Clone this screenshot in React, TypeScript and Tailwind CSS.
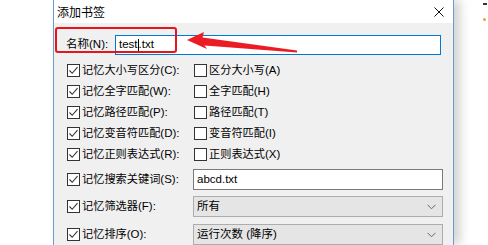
import React from "react";

type Row = { left: string; leftKey: string; right?: string; rightKey?: string };

const rows: Row[] = [
  { left: "记忆大小写区分", leftKey: "(C):", right: "区分大小写", rightKey: "(A)" },
  { left: "记忆全字匹配", leftKey: "(W):", right: "全字匹配", rightKey: "(H)" },
  { left: "记忆路径匹配", leftKey: "(P):", right: "路径匹配", rightKey: "(T)" },
  { left: "记忆变音符匹配", leftKey: "(D):", right: "变音符匹配", rightKey: "(I)" },
  { left: "记忆正则表达式", leftKey: "(R):", right: "正则表达式", rightKey: "(X)" },
];

const Check: React.FC<{ checked?: boolean }> = ({ checked }) => (
  <span className="w-[13px] h-[13px] border border-[#333] bg-white flex items-center justify-center shrink-0">
    {checked && (
      <svg width="11" height="11" viewBox="0 0 11 11">
        <path d="M1.5 5.5 L4.2 8.3 L9.5 2.2" stroke="#333" strokeWidth="1.1" fill="none" />
      </svg>
    )}
  </span>
);

const Label: React.FC<{ text: string; hotkey: string }> = ({ text, hotkey }) => (
  <span className="ml-[2px] whitespace-nowrap text-[11.2px]">
    {text}
    <span className="text-[11.5px]">{hotkey}</span>
  </span>
);

const Chevron = () => (
  <svg width="9" height="6" viewBox="0 0 9 6">
    <path d="M0.5 0.8 L4.5 4.8 L8.5 0.8" stroke="#666" strokeWidth="1" fill="none" />
  </svg>
);

const App: React.FC = () => {
  return (
    <div className="relative w-[488px] h-[245px] overflow-hidden bg-white flex text-black text-[11.5px] leading-none font-['Liberation_Sans','Noto_Sans_CJK_SC',sans-serif]">
      <div className="w-[53px] shrink-0" />

      {/* dialog */}
      <div className="w-[401px] shrink-0 border-x border-[#6b9cd0] bg-[#f0f0f0] shadow-[6px_0_10px_rgba(0,0,0,0.18)] flex flex-col">
        <div className="h-[23px] bg-white flex items-center justify-between pl-[3px] pr-[9px]">
          <span className="text-[12px] font-['Noto_Sans_CJK_SC',sans-serif]">添加书签</span>
          <svg width="10" height="10" viewBox="0 0 10 10">
            <path d="M0.5 0.5 L9.5 9.5 M9.5 0.5 L0.5 9.5" stroke="#111" strokeWidth="1" />
          </svg>
        </div>

        <div className="flex items-center mt-[12px] h-[20px] pl-[12px]">
          <span className="w-[49px] whitespace-nowrap">
            名称<span>(N):</span>
          </span>
          <div className="w-[326px] h-[20px] border border-[#0078d7] bg-white flex items-center pl-[3px]">
            <span>test</span>
            <span className="w-px h-[13px] bg-black" />
            <span>.txt</span>
          </div>
        </div>

        <div className="mt-[5px] pl-[13px] grid grid-cols-[126px_250px]">
          {rows.map((r) => (
            <React.Fragment key={r.left}>
              <div className="h-[21px] flex items-center">
                <Check checked />
                <Label text={r.left} hotkey={r.leftKey} />
              </div>
              <div className="h-[21px] flex items-center pl-[1px]">
                <Check />
                <Label text={r.right!} hotkey={r.rightKey!} />
              </div>
            </React.Fragment>
          ))}

          <div className="h-[21px] mt-[4px] flex items-center">
            <Check checked />
            <Label text="记忆搜索关键词" hotkey="(S):" />
          </div>
          <div className="h-[21px] mt-[4px] border border-[#7a7a7a] bg-white flex items-center pl-[3px]">
            abcd.txt
          </div>

          <div className="h-[21px] mt-[6px] flex items-center">
            <Check checked />
            <Label text="记忆筛选器" hotkey="(F):" />
          </div>
          <div className="h-[21px] mt-[6px] border border-[#adadad] bg-[#e5e5e5] flex items-center justify-between pl-[3px] pr-[6px]">
            <span>所有</span>
            <Chevron />
          </div>

          <div className="h-[21px] mt-[7px] flex items-center">
            <Check checked />
            <Label text="记忆排序" hotkey="(O):" />
          </div>
          <div className="h-[21px] mt-[7px] border border-[#adadad] bg-[#e5e5e5] flex items-center justify-between pl-[3px] pr-[6px]">
            <span>运行次数 (降序)</span>
            <Chevron />
          </div>
        </div>
      </div>

      {/* background window edge */}
      <div className="flex-1 flex flex-col items-end pt-[3px] pr-[1px]">
        <span className="w-[4px] h-[2px] bg-[#333]" />
        <span className="mt-[13px] w-[3px] h-[3px] bg-[#f0a040] rounded-full mr-[1px]" />
      </div>

      {/* annotation */}
      <div className="absolute left-[55px] top-[27px] w-[122px] h-[26px] border-[2.5px] border-[#e8141c] rounded-[3px]" />
      <svg className="absolute left-0 top-0" width="488" height="245" viewBox="0 0 488 245">
        <polygon
          points="187,40 204,32 202.5,37.5 297,50.5 297,52.5 204.5,45.5 207,49"
          fill="#ec1c24"
        />
      </svg>
    </div>
  );
};

export default App;
